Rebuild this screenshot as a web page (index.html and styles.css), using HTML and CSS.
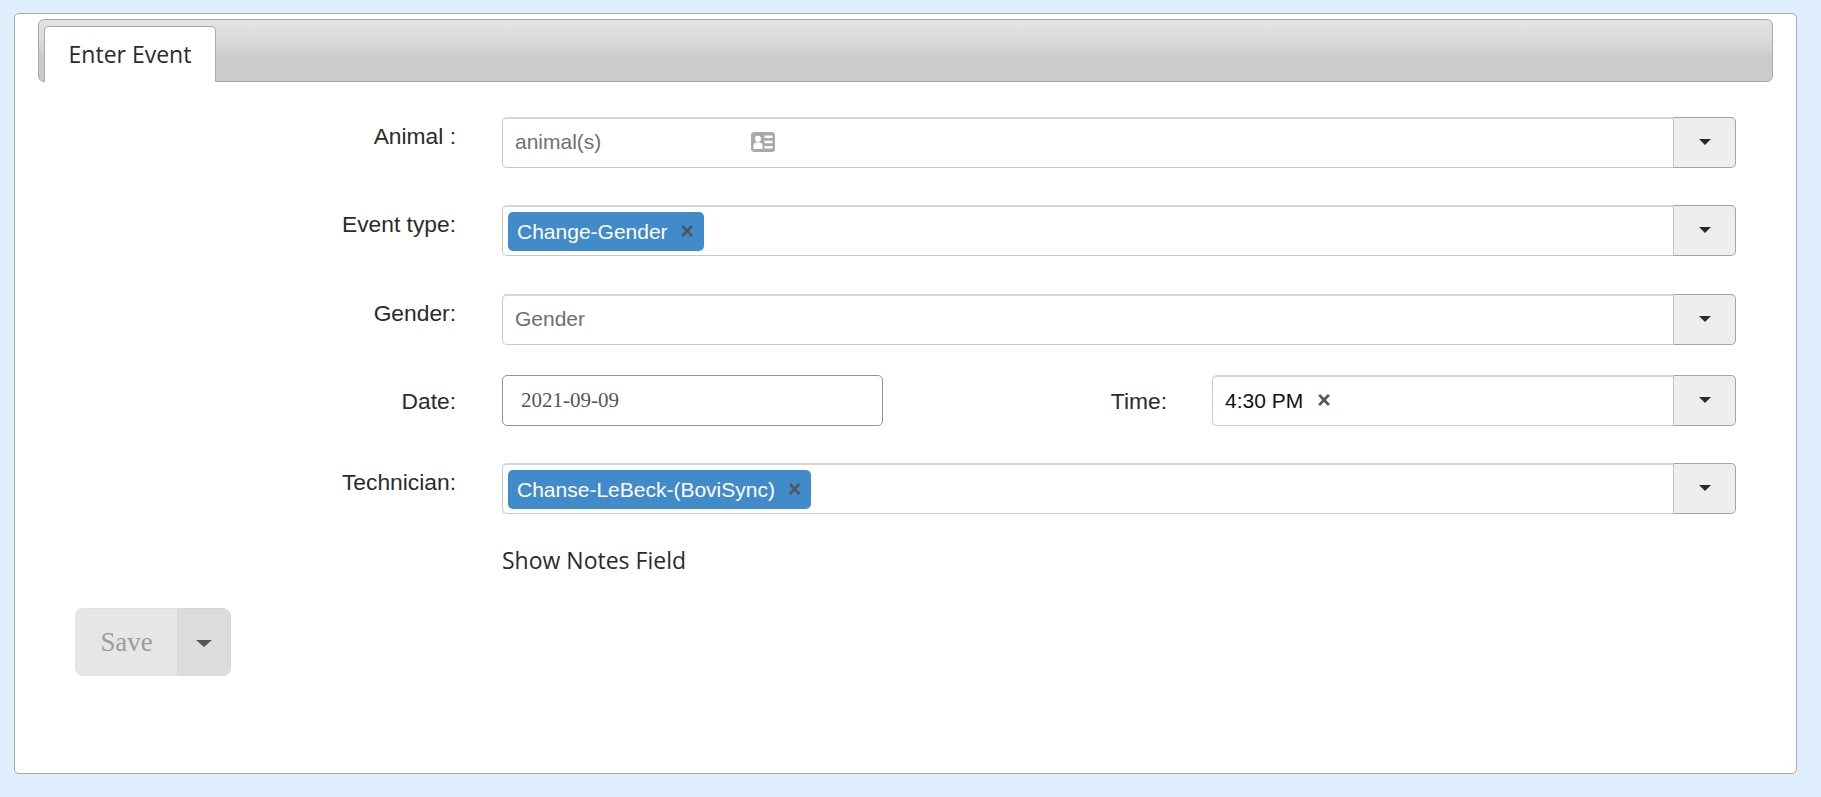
FILE: index.html
```html
<!DOCTYPE html>
<html lang="en">
<head>
<meta charset="utf-8">
<title>Enter Event</title>
<link rel="stylesheet" href="styles.css">
</head>
<body>
<main class="panel">
  <div class="tabbar"><div class="tab">Enter Event</div></div>
  <form class="form">
    <div class="row row-animal">
      <label class="label">Animal :</label>
      <div class="combo">
        <div class="field">
          <span class="placeholder placeholder-animal">animal(s)</span>
          <svg class="card-icon" width="24" height="20" viewBox="0 0 24 20"><rect width="24" height="20" rx="3.5" fill="#a9a9a9"/><circle cx="7" cy="6.800" r="3.100" fill="#fff"/><path d="M2.500 17v-3.200c0-2 1.300-3.200 3-3.200h3c1.700 0 3 1.200 3 3.200V17z" fill="#fff"/><path d="M13.500 3.500h8v2.500h-8zM13.500 8.700h8v2.500h-8zM13.500 13.900h8v2.500h-8z" fill="#fff"/></svg>
        </div>
        <div class="toggle"><span class="caret"></span></div>
      </div>
    </div>
    <div class="row row-event">
      <label class="label">Event type:</label>
      <div class="combo">
        <div class="field field-tags"><span class="tag">Change-Gender<span class="remove">×</span></span></div>
        <div class="toggle"><span class="caret"></span></div>
      </div>
    </div>
    <div class="row row-gender">
      <label class="label">Gender:</label>
      <div class="combo">
        <div class="field"><span class="placeholder">Gender</span></div>
        <div class="toggle"><span class="caret"></span></div>
      </div>
    </div>
    <div class="row row-date">
      <label class="label label-mid">Date:</label>
      <div class="date-box">2021-09-09</div>
      <label class="label label-time">Time:</label>
      <div class="combo combo-time">
        <div class="field field-time"><span class="value">4:30 PM</span><span class="remove remove-plain">×</span></div>
        <div class="toggle"><span class="caret"></span></div>
      </div>
    </div>
    <div class="row row-tech">
      <label class="label">Technician:</label>
      <div class="combo">
        <div class="field field-tags"><span class="tag">Chanse-LeBeck-(BoviSync)<span class="remove">×</span></span></div>
        <div class="toggle"><span class="caret"></span></div>
      </div>
    </div>
    <div class="notes">Show Notes Field</div>
    <div class="save-group">
      <span class="save">Save</span>
      <span class="save-toggle"><span class="caret caret-save"></span></span>
    </div>
  </form>
</main>
</body>
</html>
```
FILE: styles.css
```css
* { box-sizing: border-box; }
html, body { height: 100%; }
body {
  margin: 0;
  background: #deeefd;
  overflow: hidden;
  font-family: "Liberation Sans", Arial, sans-serif;
  color: #2b2b2b;
}
.panel {
  margin: 13px 24px 0 14px;
  height: 761px;
  background: #fff;
  border: 1px solid #a9a9a9;
  border-radius: 5px;
  padding: 5px 23px 0 23px;
}
.tabbar {
  height: 63px;
  border: 1px solid #a9a9a9;
  border-radius: 6px;
  background: linear-gradient(#e3e3e3 0, #dcdcdc 30%, #cbcbcb 62%, #cbcbcb 100%);
  padding: 6px 0 0 5px;
}
.tab {
  width: 172px;
  height: 56px;
  background: #fff;
  border: 1px solid #a9a9a9;
  border-bottom: 0;
  border-radius: 5px 5px 0 0;
  font-family: "Open Sans", sans-serif;
  font-size: 23px;
  line-height: 54px;
  text-align: center;
  color: #2b2b2b;
}
.form { display: block; }
.row { display: flex; height: 51px; }
.row-animal { margin-top: 35px; }
.row-event { margin-top: 37px; }
.row-gender { margin-top: 38px; }
.row-date { margin-top: 30px; }
.row-tech { margin-top: 37px; }
.label {
  flex: none;
  width: 418px;
  padding-top: 6px;
  text-align: right;
  font-size: 22.8px;
  line-height: 26px;
}
.label-mid { padding-top: 13px; }
.combo {
  flex: none;
  display: flex;
  width: 1234px;
  height: 51px;
  margin-left: 46px;
}
.field {
  flex: 1;
  display: flex;
  align-items: center;
  border: 1px solid #c9c9c9;
  border-right: 0;
  border-top-width: 2px;
  border-top-color: #d6d6d6;
  border-radius: 5px 0 0 5px;
  padding-left: 12px;
  padding-bottom: 2px;
  background: #fff;
}
.field-tags { padding: 1px 0 0 5px; }
.field-time { padding-bottom: 1px; }
.placeholder {
  font-size: 21px;
  color: #6f6f6f;
}
.placeholder-animal { width: 236px; }
.card-icon { flex: none; }
.toggle {
  flex: none;
  width: 63px;
  display: flex;
  align-items: center;
  justify-content: center;
  background: #eee;
  border: 1px solid #a3a3a3;
  border-left-color: #c4c4c4;
  border-radius: 0 5px 5px 0;
}
.caret {
  display: block;
  width: 0;
  height: 0;
  margin-top: -1px;
  border-top: 6px solid #2b2b2b;
  border-left: 6px solid transparent;
  border-right: 6px solid transparent;
}
.tag {
  display: inline-flex;
  align-items: center;
  height: 39px;
  padding: 0 10px 0 9px;
  background: #428bca;
  border-radius: 5px;
  color: #fff;
  font-size: 21px;
}
.remove {
  margin-left: 13px;
  color: #555;
  font-weight: 700;
  font-size: 23px;
}
.value { font-size: 21px; color: #111; }
.remove-plain { margin-left: 14px; }
.date-box {
  flex: none;
  width: 381px;
  height: 51px;
  margin-left: 46px;
  padding-left: 18px;
  border: 1px solid #949494;
  border-radius: 5px;
  font-family: "Liberation Serif", serif;
  font-size: 21px;
  line-height: 49px;
  color: #555;
}
.label-time {
  width: 284px;
  padding-top: 13px;
}
.combo-time {
  width: 524px;
  margin-left: 45px;
}
.notes {
  margin: 33px 0 0 464px;
  font-family: "Open Sans", sans-serif;
  font-size: 23px;
  line-height: 27px;
  color: #2b2b2b;
}
.save-group {
  display: flex;
  width: 156px;
  height: 68px;
  margin: 34px 0 0 37px;
}
.save {
  flex: none;
  width: 102px;
  background: #e6e6e6;
  border: 1px solid #e0e0e0;
  border-right: 0;
  border-radius: 8px 0 0 8px;
  font-family: "Liberation Serif", serif;
  font-size: 26.8px;
  line-height: 66px;
  text-align: center;
  color: #9c9c9c;
}
.save-toggle {
  flex: 1;
  display: flex;
  align-items: center;
  justify-content: center;
  background: #dcdcdc;
  border: 1px solid #d6d6d6;
  border-radius: 0 8px 8px 0;
}
.caret-save {
  margin-top: 2px;
  border-top: 7px solid #555;
  border-left: 8px solid transparent;
  border-right: 8px solid transparent;
}
```
